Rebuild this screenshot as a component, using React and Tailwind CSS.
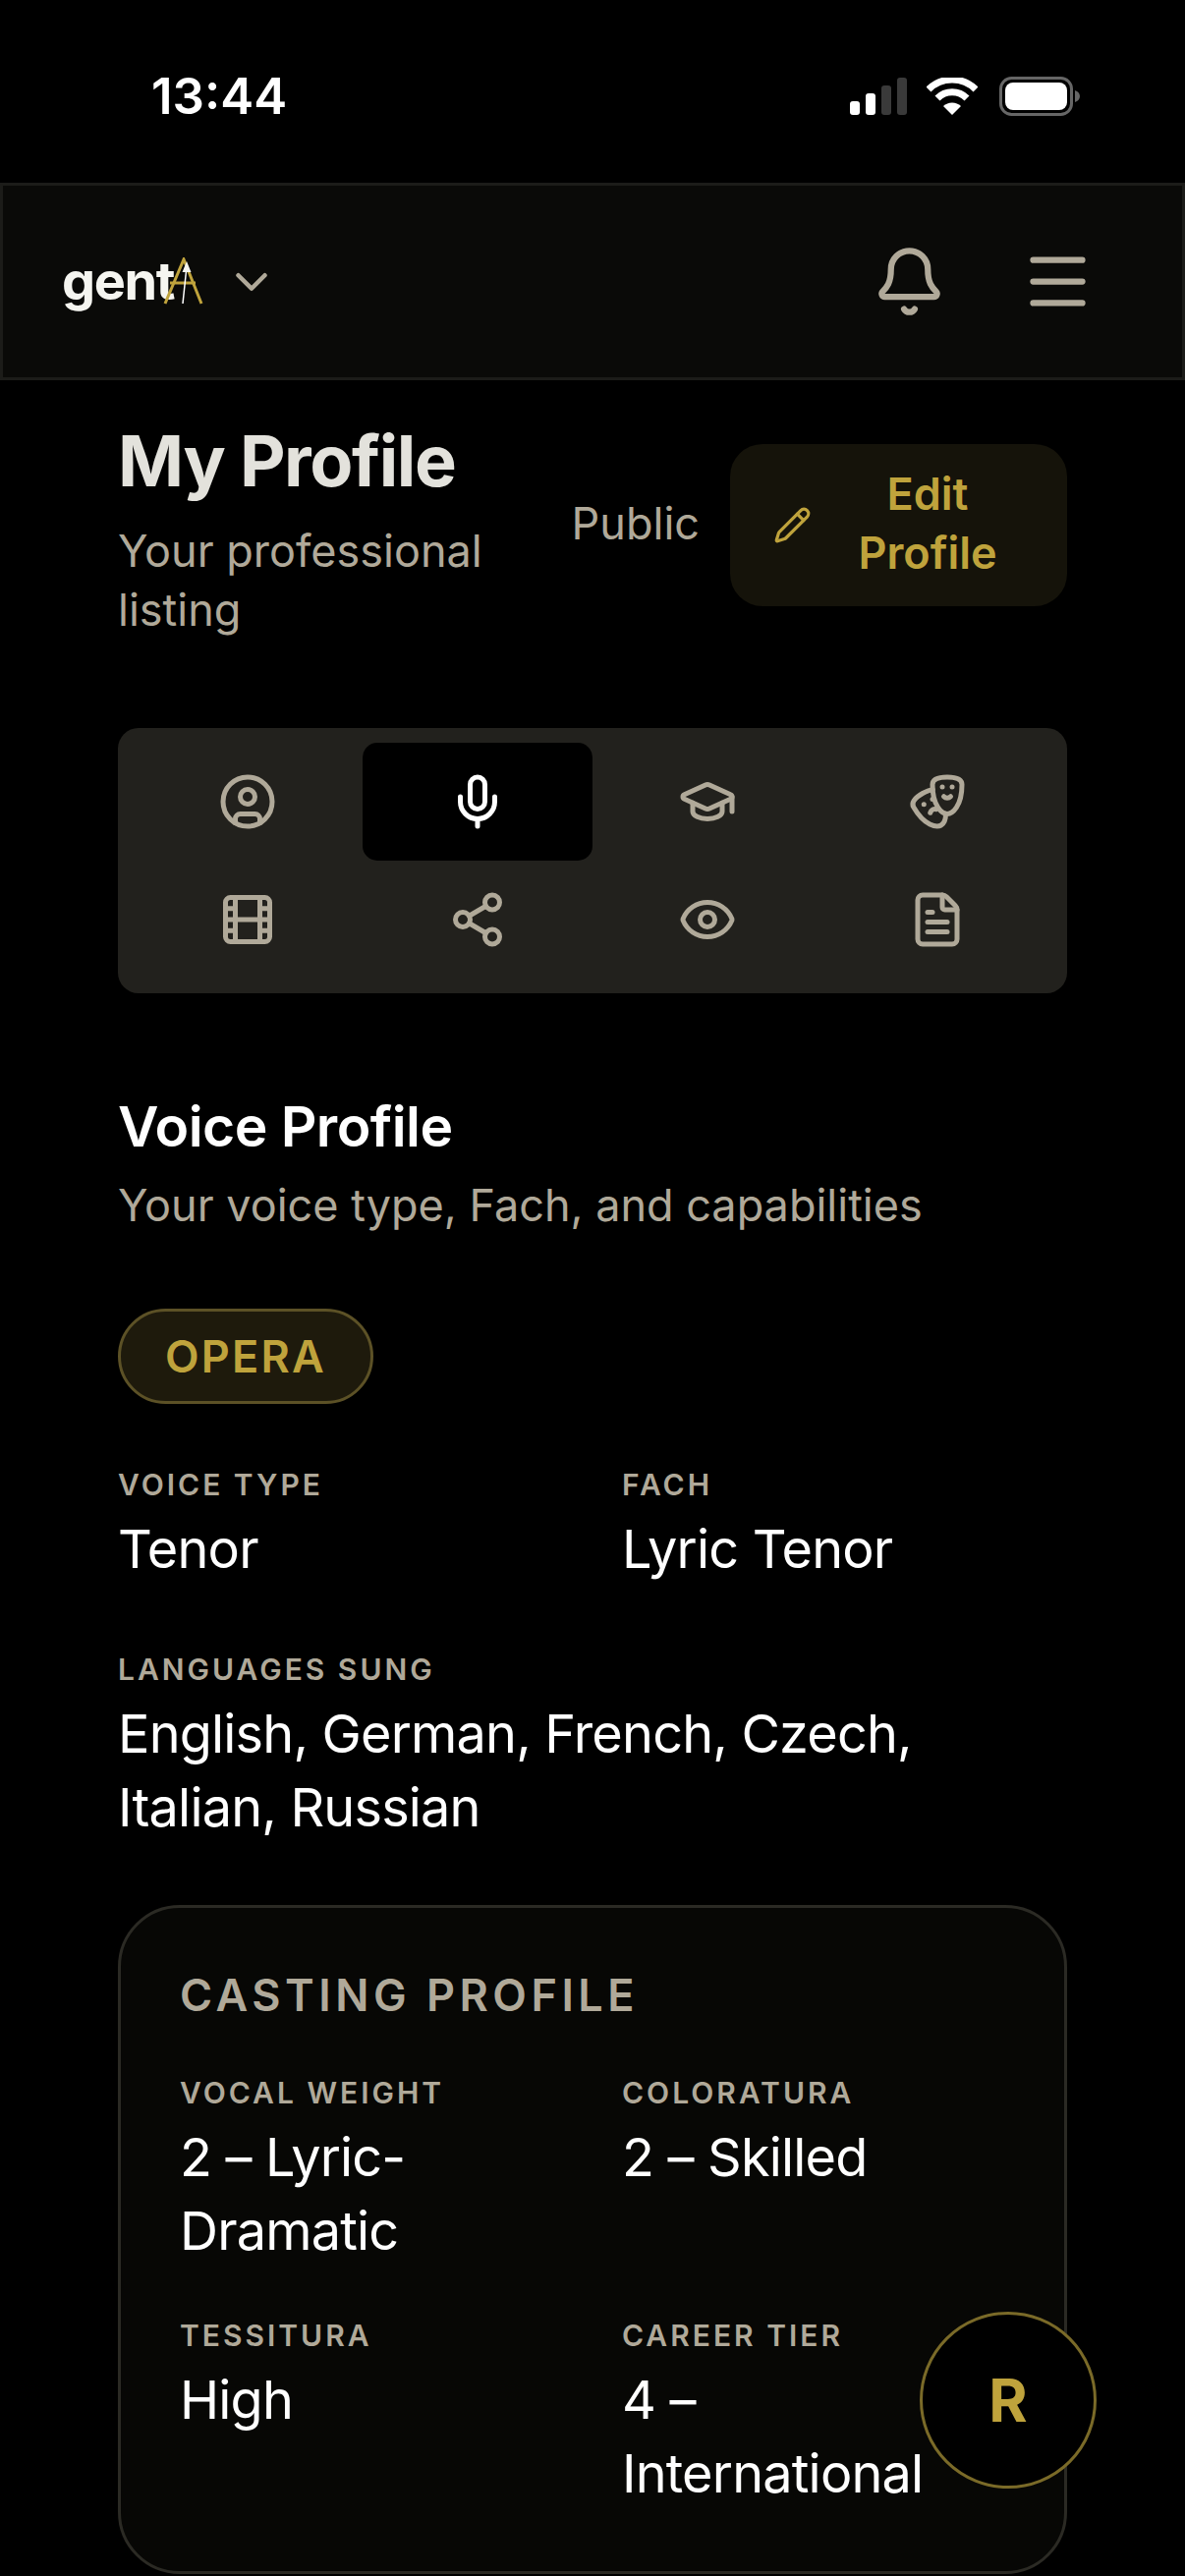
import { Bell, Menu, ChevronDown, Pencil, CircleUser, Mic, GraduationCap, Drama, Film, Share2, Eye, FileText } from "lucide-react";

const tabs = [
  [CircleUser, false],
  [Mic, true],
  [GraduationCap, false],
  [Drama, false],
  [Film, false],
  [Share2, false],
  [Eye, false],
  [FileText, false],
];

function Field({ label, value }) {
  return (
    <div>
      <div className="mb-[5px] text-[30px] leading-[45px] font-semibold tracking-[0.1em] text-[#b0a999] uppercase">{label}</div>
      <div className="text-[54px] leading-[75px] tracking-[-0.015em] text-white">{value}</div>
    </div>
  );
}

export default function App() {
  return (
    <div className="relative h-[2622px] overflow-hidden bg-black font-['Inter',sans-serif]">
      <div className="flex h-[186px] items-center justify-between pl-[154px] pr-[107px] pt-[10px]">
        <span className="text-[51px] font-semibold text-white">13:44</span>
        <div className="flex items-center gap-[20px]">
          <svg width="58" height="38" viewBox="0 0 58 38">
            <rect x="0" y="24" width="10" height="14" rx="3" fill="#fff" />
            <rect x="16" y="16" width="10" height="22" rx="3" fill="#fff" />
            <rect x="32" y="8" width="10" height="30" rx="3" fill="#3a3a3a" />
            <rect x="48" y="0" width="10" height="38" rx="3" fill="#3a3a3a" />
          </svg>
          <svg width="52" height="38" viewBox="0 0 52 38">
            <path d="M2 12 A34 34 0 0 1 50 12" fill="none" stroke="#fff" strokeWidth="7" />
            <path d="M11 21 A21 21 0 0 1 41 21" fill="none" stroke="#fff" strokeWidth="7" />
            <path d="M26 38 L17 29 A13 13 0 0 1 35 29 Z" fill="#fff" />
          </svg>
          <svg width="82" height="40" viewBox="0 0 82 40" className="ml-[2px]">
            <rect x="1.5" y="1.5" width="72" height="37" rx="11" fill="none" stroke="#666" strokeWidth="3" />
            <rect x="6" y="6" width="63" height="28" rx="8" fill="#fff" />
            <path d="M77 14 C80 15 82 17 82 20 C82 23 80 25 77 26 Z" fill="#666" />
          </svg>
        </div>
      </div>

      <header className="flex h-[201px] items-center justify-between border-[3px] border-[#1c1c19] bg-[#0a0a08] pl-[60px] pr-[89px]">
        <div className="flex items-center">
          <span className="mb-[2px] text-[54px] font-bold tracking-[-0.025em] text-[#f5f5f0]">gent</span>
          <svg width="41" height="49" viewBox="0 0 41 49" className="-ml-[11px]">
            <path d="M2 47 L21 2 L39 47" fill="none" stroke="#bfa33c" strokeWidth="3" />
            <path d="M7 26 H33" stroke="#bfa33c" strokeWidth="3" />
            <path d="M20 47 L24 9" stroke="#fff" strokeWidth="1.5" />
            <path d="M24 4 L28.5 15 H19.5 Z" fill="#f5f5f0" />
          </svg>
          <ChevronDown size={54} color="#b0a999" strokeWidth={2} className="ml-[22px]" />
        </div>
        <div className="flex items-center gap-[76px]">
          <Bell size={75} color="#b0a999" strokeWidth={2} />
          <Menu size={75} color="#b0a999" strokeWidth={2} />
        </div>
      </header>

      <main className="px-[120px]">
        <div className="mt-[37px] flex items-start justify-between">
          <div className="w-[400px]">
            <h1 className="text-[72px] leading-[90px] font-bold tracking-[-0.02em] text-[#e3e2dc]">My Profile</h1>
            <p className="mt-[17px] text-[45px] leading-[60px] text-[#b0a999]">Your professional listing</p>
          </div>
          <div className="mt-[28px] flex items-center gap-[31px]">
            <span className="mb-[3px] text-[45px] text-[#b0a999]">Public</span>
            <button className="flex h-[165px] w-[343px] items-center gap-[22px] rounded-[33px] bg-[#15130a] pb-[3px] pl-[44px] pr-[46px] text-center text-[45px] leading-[60px] font-semibold text-[#bfa33c]">
              <Pencil size={39} strokeWidth={2} className="mt-[3px] shrink-0" />
              <span>Edit Profile</span>
            </button>
          </div>
        </div>

        <div className="mt-[90px] grid grid-cols-4 rounded-[21px] bg-[#22211d] p-[15px]">
          {tabs.map(([Icon, active], i) => (
            <div key={i} className={`flex h-[120px] items-center justify-center rounded-[15px] ${active ? "bg-black text-white" : "text-[#b0a999]"}`}>
              <Icon size={60} strokeWidth={2} />
            </div>
          ))}
        </div>

        <h2 className="mt-[100px] text-[57px] leading-[72px] font-semibold tracking-[-0.01em] text-white">Voice Profile</h2>
        <p className="mt-[14px] text-[45px] leading-[60px] text-[#b0a999]">Your voice type, Fach, and capabilities</p>

        <div className="mt-[75px] inline-flex h-[97px] w-[260px] items-center justify-center rounded-full border-[3px] border-[#5c5126] bg-[#1e1a0c] text-[45px] font-semibold tracking-[0.05em] text-[#bfa33c]">OPERA</div>

        <div className="mt-[60px] grid grid-cols-[513px_1fr]">
          <Field label="Voice Type" value="Tenor" />
          <Field label="Fach" value="Lyric Tenor" />
        </div>
        <div className="mt-[63px]">
          <Field label="Languages Sung" value="English, German, French, Czech, Italian, Russian" />
        </div>

        <section className="mt-[62px] rounded-[63px] border-[3px] border-[#2b2a24] bg-[#070705] px-[60px] pt-[59px] pb-[62px]">
          <h3 className="text-[45px] leading-[60px] font-semibold tracking-[0.1em] text-[#b0a999]">CASTING PROFILE</h3>
          <div className="mt-[47px] grid grid-cols-[450px_1fr] gap-y-[47px]">
            <Field label="Vocal Weight" value="2 – Lyric-Dramatic" />
            <Field label="Coloratura" value="2 – Skilled" />
            <Field label="Tessitura" value="High" />
            <Field label="Career Tier" value="4 – International" />
          </div>
        </section>
      </main>

      <div className="absolute left-[936px] top-[2353px] flex h-[180px] w-[180px] items-center justify-center rounded-full border-[3px] border-[#7a6a28] bg-black text-[60px] font-bold text-[#bfa33c]">R</div>
    </div>
  );
}
